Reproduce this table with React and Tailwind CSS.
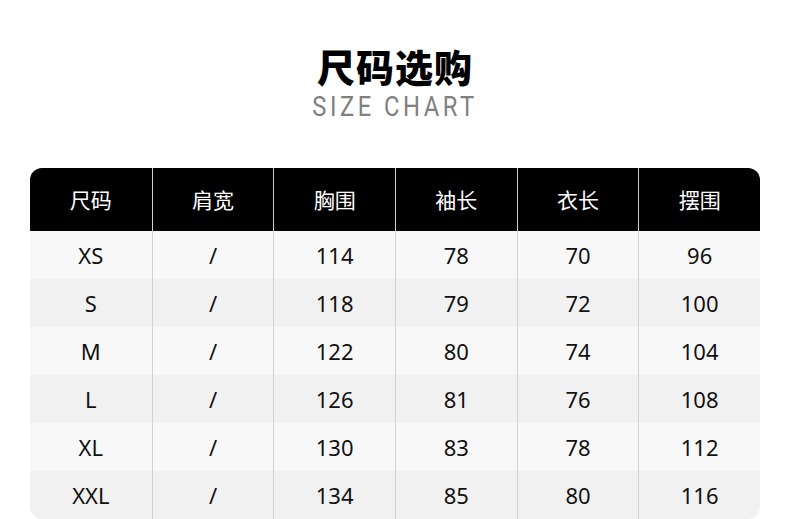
const headers = ["尺码", "肩宽", "胸围", "袖长", "衣长", "摆围"];

const rows = [
  ["XS", "/", "114", "78", "70", "96"],
  ["S", "/", "118", "79", "72", "100"],
  ["M", "/", "122", "80", "74", "104"],
  ["L", "/", "126", "81", "76", "108"],
  ["XL", "/", "130", "83", "78", "112"],
  ["XXL", "/", "134", "85", "80", "116"],
];

export default function App() {
  return (
    <div className="w-[790px] h-[519px] bg-white overflow-hidden font-['Noto_Sans','Noto_Sans_CJK_SC',sans-serif]">
      <div className="flex flex-col items-center pt-[43px]">
        <h1 className="text-[38px] leading-[46px] font-black text-black tracking-[1px] font-['Noto_Sans_CJK_SC',sans-serif]">
          尺码选购
        </h1>
        <p className="mt-[2px] text-[27px] leading-[32px] tracking-[4px] text-[#808080] font-['Roboto',sans-serif] scale-x-[0.88]">
          SIZE CHART
        </p>
      </div>

      <div className="mx-[30px] mt-[45px] rounded-[12px] overflow-hidden">
        <div className="grid grid-cols-6 h-[63px] bg-black">
          {headers.map((h, i) => (
            <div
              key={h}
              className={`flex items-center justify-center text-white text-[21px] font-['Noto_Sans_CJK_SC',sans-serif] ${
                i > 0 ? "border-l border-[#cfcfcf]" : ""
              }`}
            >
              {h}
            </div>
          ))}
        </div>
        {rows.map((row, r) => (
          <div
            key={row[0]}
            className={`grid grid-cols-6 h-[48px] ${r % 2 === 0 ? "bg-[#f8f8f8]" : "bg-[#f1f1f1]"}`}
          >
            {row.map((cell, i) => (
              <div
                key={i}
                className={`flex items-center justify-center text-[22px] text-[#111] ${
                  i > 0 ? "border-l border-[#d2d2d2]" : ""
                }`}
              >
                {cell}
              </div>
            ))}
          </div>
        ))}
      </div>
    </div>
  );
}
